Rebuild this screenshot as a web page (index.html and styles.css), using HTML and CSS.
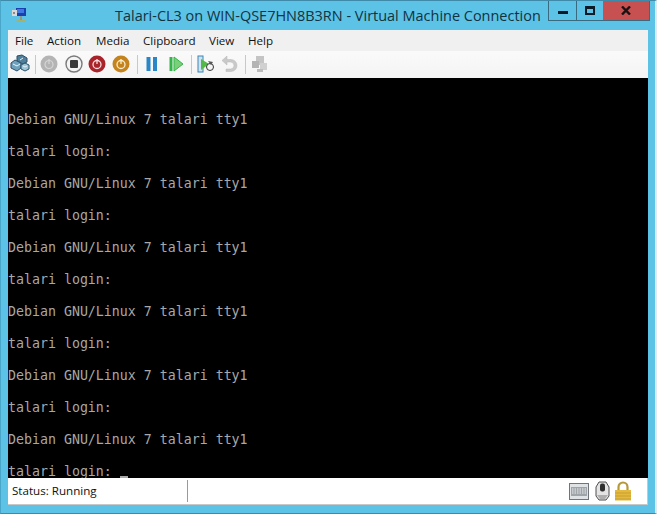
FILE: index.html
```html
<!DOCTYPE html>
<html lang="en">
<head>
<meta charset="utf-8">
<title>Talari-CL3 on WIN-QSE7HN8B3RN - Virtual Machine Connection</title>
<link rel="stylesheet" href="styles.css">
</head>
<body>
<div class="window">
  <header class="titlebar">
    <svg class="app-icon" width="20" height="20" viewBox="0 0 20 20"><rect x="7" y="3" width="10" height="8" fill="#1c3fb0"/><rect x="8" y="4" width="7" height="4" fill="#3f7ae0"/><rect x="3" y="5" width="5" height="6" fill="#d8d8d8"/><rect x="4" y="7" width="2" height="2" fill="#8a8a8a"/><rect x="11" y="11" width="2" height="4" fill="#8d9a86"/><path d="M6 17h12l-2-2H8z" fill="#a9b06a"/></svg>
    <div class="title">Talari-CL3 on WIN-QSE7HN8B3RN - Virtual Machine Connection</div>
    <div class="controls">
      <div class="ctl ctl-min"><span class="glyph-min"></span></div>
      <div class="ctl ctl-max"><span class="glyph-max"></span></div>
      <div class="ctl ctl-close"><svg width="10" height="9" viewBox="0 0 10 9"><path d="M1 0.5 L9 8.5 M9 0.5 L1 8.5" stroke="#1a1212" stroke-width="2.4"/></svg></div>
    </div>
  </header>
  <main class="client">
    <nav class="menu">
      <span class="m m-file">File</span><span class="m m-action">Action</span><span class="m m-media">Media</span><span class="m m-clip">Clipboard</span><span class="m m-view">View</span><span class="m m-help">Help</span>
    </nav>
    <div class="toolbar">
      <svg class="ti ti-net" width="20" height="20" viewBox="0 0 20 20"><path d="M7 2l5-1 5 3v4l-4 2-6-3z" fill="#4f7f9a" stroke="#2c4f66"/><path d="M1 9l4-3 6 3v5l-4 3-6-3z" fill="#6fa3bd" stroke="#2c4f66"/><path d="M11 11l4-2 4 2v4l-4 2-4-2z" fill="#9cc6d8" stroke="#2c4f66"/><path d="M3 10l4 2 3-2M13 4l-3 2M13 12l2 1 2-1" stroke="#e8f3f8" fill="none"/></svg>
      <span class="sep sep-1"></span>
      <svg class="ti ti-off" width="18" height="18" viewBox="0 0 18 18"><circle cx="9" cy="9" r="8.5" fill="#b4b4b4"/><circle cx="9" cy="9.500" r="4" fill="none" stroke="#d6d6d6" stroke-width="1.2"/><path d="M9 4v5" stroke="#d6d6d6" stroke-width="1.2"/></svg>
      <svg class="ti ti-stop" width="18" height="18" viewBox="0 0 18 18"><circle cx="9" cy="9" r="8" fill="#f4f4f4" stroke="#7a7a7a" stroke-width="1.400"/><rect x="5" y="5" width="8" height="8" rx="1" fill="#3a3a3a"/></svg>
      <svg class="ti ti-red" width="18" height="18" viewBox="0 0 18 18"><circle cx="9" cy="9" r="8.500" fill="#a8242a"/><circle cx="9" cy="9.500" r="4" fill="none" stroke="#f6dcdc" stroke-width="1.300"/><path d="M9 4v5" stroke="#f6dcdc" stroke-width="1.300"/></svg>
      <svg class="ti ti-amber" width="18" height="18" viewBox="0 0 18 18"><circle cx="9" cy="9" r="8.500" fill="#c4831f"/><circle cx="9" cy="9.500" r="4" fill="none" stroke="#fbeecb" stroke-width="1.300"/><path d="M9 4v5" stroke="#fbeecb" stroke-width="1.300"/></svg>
      <span class="sep sep-2"></span>
      <svg class="ti ti-pause" width="12" height="16" viewBox="0 0 12 16"><rect x="0.5" y="1" width="4" height="14" fill="#2a86c8"/><rect x="7" y="1" width="4" height="14" fill="#2a86c8"/></svg>
      <svg class="ti ti-play" width="15" height="16" viewBox="0 0 15 16"><rect x="0.5" y="1" width="3" height="14" fill="#35b44a"/><path d="M5 1l9 7-9 7z" fill="#7ccf7a" stroke="#35b44a"/></svg>
      <span class="sep sep-3"></span>
      <svg class="ti ti-snap" width="18" height="18" viewBox="0 0 18 18"><rect x="1" y="1" width="5" height="16" fill="#cfe3ef" stroke="#3a86b8"/><path d="M4 4l8 5-8 6z" fill="#54b948"/><circle cx="13" cy="12" r="3.500" fill="#f4f4f4" stroke="#333"/><path d="M11 6l5 1-2 3z" fill="#555"/></svg>
      <svg class="ti ti-undo" width="17" height="17" viewBox="0 0 17 17"><path d="M6 1L1 5.500 6 10V7h3.500a3 3 0 0 1 0 7H5v2.500h5a5.500 5.500 0 0 0 0-12H6z" fill="#c9c9c9" stroke="#b6b6b6" stroke-width=".5"/></svg>
      <span class="sep sep-4"></span>
      <svg class="ti ti-ins" width="18" height="18" viewBox="0 0 18 18"><rect x="5" y="1" width="8" height="9" fill="#c4c4c4"/><rect x="1" y="6" width="7" height="7" fill="#b4b4b4"/><rect x="9" y="8" width="7" height="7" fill="#d0d0d0"/><rect x="6" y="14" width="6" height="3" fill="#bcbcbc"/></svg>
    </div>
    <pre class="terminal">


Debian GNU/Linux 7 talari tty1

talari login:

Debian GNU/Linux 7 talari tty1

talari login:

Debian GNU/Linux 7 talari tty1

talari login:

Debian GNU/Linux 7 talari tty1

talari login:

Debian GNU/Linux 7 talari tty1

talari login:

Debian GNU/Linux 7 talari tty1

talari login: <span class="cursor"></span></pre>
    <footer class="status">
      <div class="status-text">Status: Running</div>
      <div class="status-icons">
        <svg width="20" height="17" viewBox="0 0 20 17"><rect x=".5" y=".5" width="19" height="16" fill="#dfe3e6" stroke="#6f757a"/><rect x="2" y="4" width="16" height="9" fill="#9fa4a8"/><path d="M3 6h14M3 8h14M3 10h14" stroke="#eceff1" stroke-dasharray="1.500 1"/></svg>
        <svg class="icon-mouse" width="15" height="20" viewBox="0 0 15 20"><path d="M4 1h7l3 5v9l-3 4H4l-3-4V6z" fill="#e4e4e4" stroke="#4e4e4e"/><rect x="5" y="2.500" width="5" height="8" rx="2" fill="#2f2f2f"/><path d="M2 14l3 4h5l3-4" fill="#aeaeae"/></svg>
        <svg width="18" height="20" viewBox="0 0 18 20"><path d="M4.500 9V6a4.500 4.500 0 0 1 9 0v3" fill="none" stroke="#b59a3c" stroke-width="2.200"/><rect x="1" y="9" width="16" height="10.500" fill="#e3b93f"/><path d="M1 12h16M1 15h16M1 18h16" stroke="#c89f2e"/></svg>
      </div>
    </footer>
  </main>
</div>
</body>
</html>
```
FILE: styles.css
```css
* { box-sizing: border-box; }
html, body { margin: 0; padding: 0; }
body { width: 657px; height: 514px; overflow: hidden; background: #5cc3e7; font-family: "Open Sans", "Liberation Sans", sans-serif; }
.window { display: flex; flex-direction: column; height: 514px; border-top: 1px solid #3f8aa8; border-left: 1px solid #4aa6c8; border-bottom: 1px solid #3f8aa8; border-right: 2px solid #dfe9ee; }
.titlebar { height: 29px; display: flex; align-items: flex-start; position: relative; flex: none; }
.app-icon { margin: 4px 0 0 8px; flex: none; }
.title { position: absolute; left: 114px; top: 4px; font-size: 14.47px; line-height: 21px; color: #12323f; white-space: nowrap; }
.controls { margin-left: auto; margin-right: 5px; display: flex; height: 20px; border: 1px solid #3a6a80; border-top: none; }
.ctl { display: flex; align-items: center; justify-content: center; height: 19px; }
.ctl-min { width: 28px; border-right: 1px solid #3a6a80; }
.ctl-max { width: 26px; }
.ctl-close { width: 46px; background: #c75050; }
.glyph-min { width: 10px; height: 3px; background: #0c1a26; margin-top: 3px; }
.glyph-max { width: 10px; height: 9px; border: 2px solid #0c1a26; border-top-width: 3px; }
.client { margin: 0 7px 0 7px; flex: none; display: flex; flex-direction: column; }
.menu { height: 21px; background: #f0f0f0; display: flex; align-items: center; font-size: 11.6px; color: #111; position: relative; }
.m { position: absolute; top: 2px; line-height: 18px; }
.m-file { left: 7px; } .m-action { left: 39px; } .m-media { left: 88px; } .m-clip { left: 135px; } .m-view { left: 201px; } .m-help { left: 240px; }
.toolbar { height: 27px; background: linear-gradient(#fafafa, #f4f4f4); position: relative; }
.ti { position: absolute; }
.ti-net { left: 2px; top: 3px; } .ti-off { left: 32px; top: 4px; } .ti-stop { left: 57px; top: 4px; } .ti-red { left: 80px; top: 4px; } .ti-amber { left: 104px; top: 4px; }
.ti-pause { left: 138px; top: 5px; } .ti-play { left: 161px; top: 5px; } .ti-snap { left: 189px; top: 4px; } .ti-undo { left: 213px; top: 4px; } .ti-ins { left: 243px; top: 4px; }
.sep { position: absolute; top: 4px; width: 1px; height: 19px; background: #c8c8c8; }
.sep-1 { left: 27px; } .sep-2 { left: 129px; } .sep-3 { left: 183px; } .sep-4 { left: 237px; }
.terminal { height: 400px; margin: 0; padding-top: 2px; background: #000; color: #a8a8a8; font-family: "DejaVu Sans Mono", monospace; font-size: 13.28px; line-height: 16px; overflow: hidden; flex: none; }
.cursor { display: inline-block; width: 8px; height: 2px; background: #a8a8a8; vertical-align: -2px; }
.status { height: 27px; background: #fff; border-bottom: 1px solid #c8c8c8; border-right: 1px solid #c8c8c8; display: flex; align-items: center; flex: none; }
.status-text { width: 180px; height: 22px; padding-left: 4px; font-size: 11.6px; line-height: 22px; color: #111; border-right: 1px solid #9a9a9a; }
.status-icons { margin-left: auto; margin-right: 15px; display: flex; align-items: center; gap: 5px; }
.icon-mouse { margin-left: 1px; margin-right: -1px; }
```
